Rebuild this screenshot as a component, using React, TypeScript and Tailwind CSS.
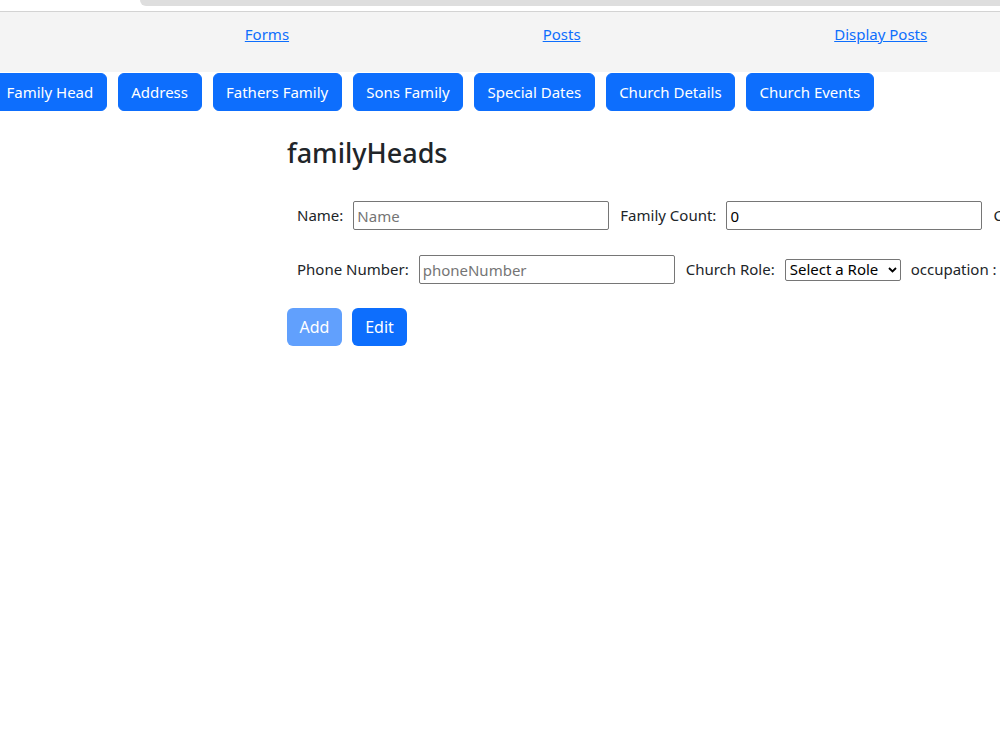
import React from "react";

const tabs = [
  "Family Head",
  "Address",
  "Fathers Family",
  "Sons Family",
  "Special Dates",
  "Church Details",
  "Church Events",
];

function Field({
  label,
  placeholder,
  value,
}: {
  label: string;
  placeholder?: string;
  value?: string;
}) {
  return (
    <>
      <label className="mr-[10px] whitespace-nowrap">{label}</label>
      <input
        className="mr-[11px] h-[29px] w-[256px] shrink-0 rounded-[2px] border border-[#767676] bg-white px-[3px] text-[15px] text-black placeholder:text-[#757575] outline-none"
        placeholder={placeholder}
        defaultValue={value}
      />
    </>
  );
}

export default function App() {
  return (
    <div
      className="relative h-[750px] w-[1000px] overflow-hidden bg-white text-[15px] text-[#212529]"
      style={{ fontFamily: '"Noto Sans", "Open Sans", sans-serif' }}
    >
      {/* top chrome strip */}
      <div className="flex h-[12px] border-b border-[#d3d3d3] bg-white">
        <div className="ml-[140px] h-[6px] flex-1 rounded-bl-[14px] bg-[#dedede]" />
      </div>

      {/* nav links */}
      <nav className="h-[60px] bg-[#f4f4f4]">
        <div className="ml-[118px] flex w-[936px] justify-around pt-[11px]">
          <a href="#" className="text-[#0d6efd] underline">
            Forms
          </a>
          <a href="#" className="text-[#0d6efd] underline">
            Posts
          </a>
          <a href="#" className="text-[#0d6efd] underline">
            Display Posts
          </a>
        </div>
      </nav>

      {/* form tabs */}
      <div className="-ml-[7px] mt-px flex gap-[11px]">
        {tabs.map((t) => (
          <button
            key={t}
            className="h-[38px] shrink-0 whitespace-nowrap rounded-[6px] border border-[#0d6efd] bg-[#0d6efd] px-[12.5px] text-white"
          >
            {t}
          </button>
        ))}
      </div>

      <div className="ml-[287px]">
        <h3 className="mt-[25px] text-[27px] font-medium leading-[34px]">familyHeads</h3>

        <div className="mt-[31px] flex items-center whitespace-nowrap pl-[10px]">
          <Field label="Name:" placeholder="Name" />
          <Field label="Family Count:" value="0" />
          <label className="whitespace-nowrap">Contact Number:</label>
        </div>

        <div className="mt-[25px] flex items-center whitespace-nowrap pl-[10px]">
          <Field label="Phone Number:" placeholder="phoneNumber" />
          <label className="mr-[10px]">Church Role:</label>
          <div className="mr-[10px] flex h-[22px] w-[116px] items-center justify-between rounded-[2px] border border-[#767676] bg-white pl-[4px] pr-[3px] text-black">
            <span>Select a Role</span>
            <svg width="9" height="6" viewBox="0 0 9 6" fill="none">
              <path d="M1 1l3.5 3.5L8 1" stroke="#000" strokeWidth="1.8" />
            </svg>
          </div>
          <label>occupation :</label>
        </div>

        <div className="mt-[24px] flex gap-[10px]">
          <button className="h-[38px] w-[55px] rounded-[6px] bg-[#0d6efd] text-[16px] text-white opacity-65">
            Add
          </button>
          <button className="h-[38px] w-[55px] rounded-[6px] bg-[#0d6efd] text-[16px] text-white">
            Edit
          </button>
        </div>
      </div>
    </div>
  );
}
